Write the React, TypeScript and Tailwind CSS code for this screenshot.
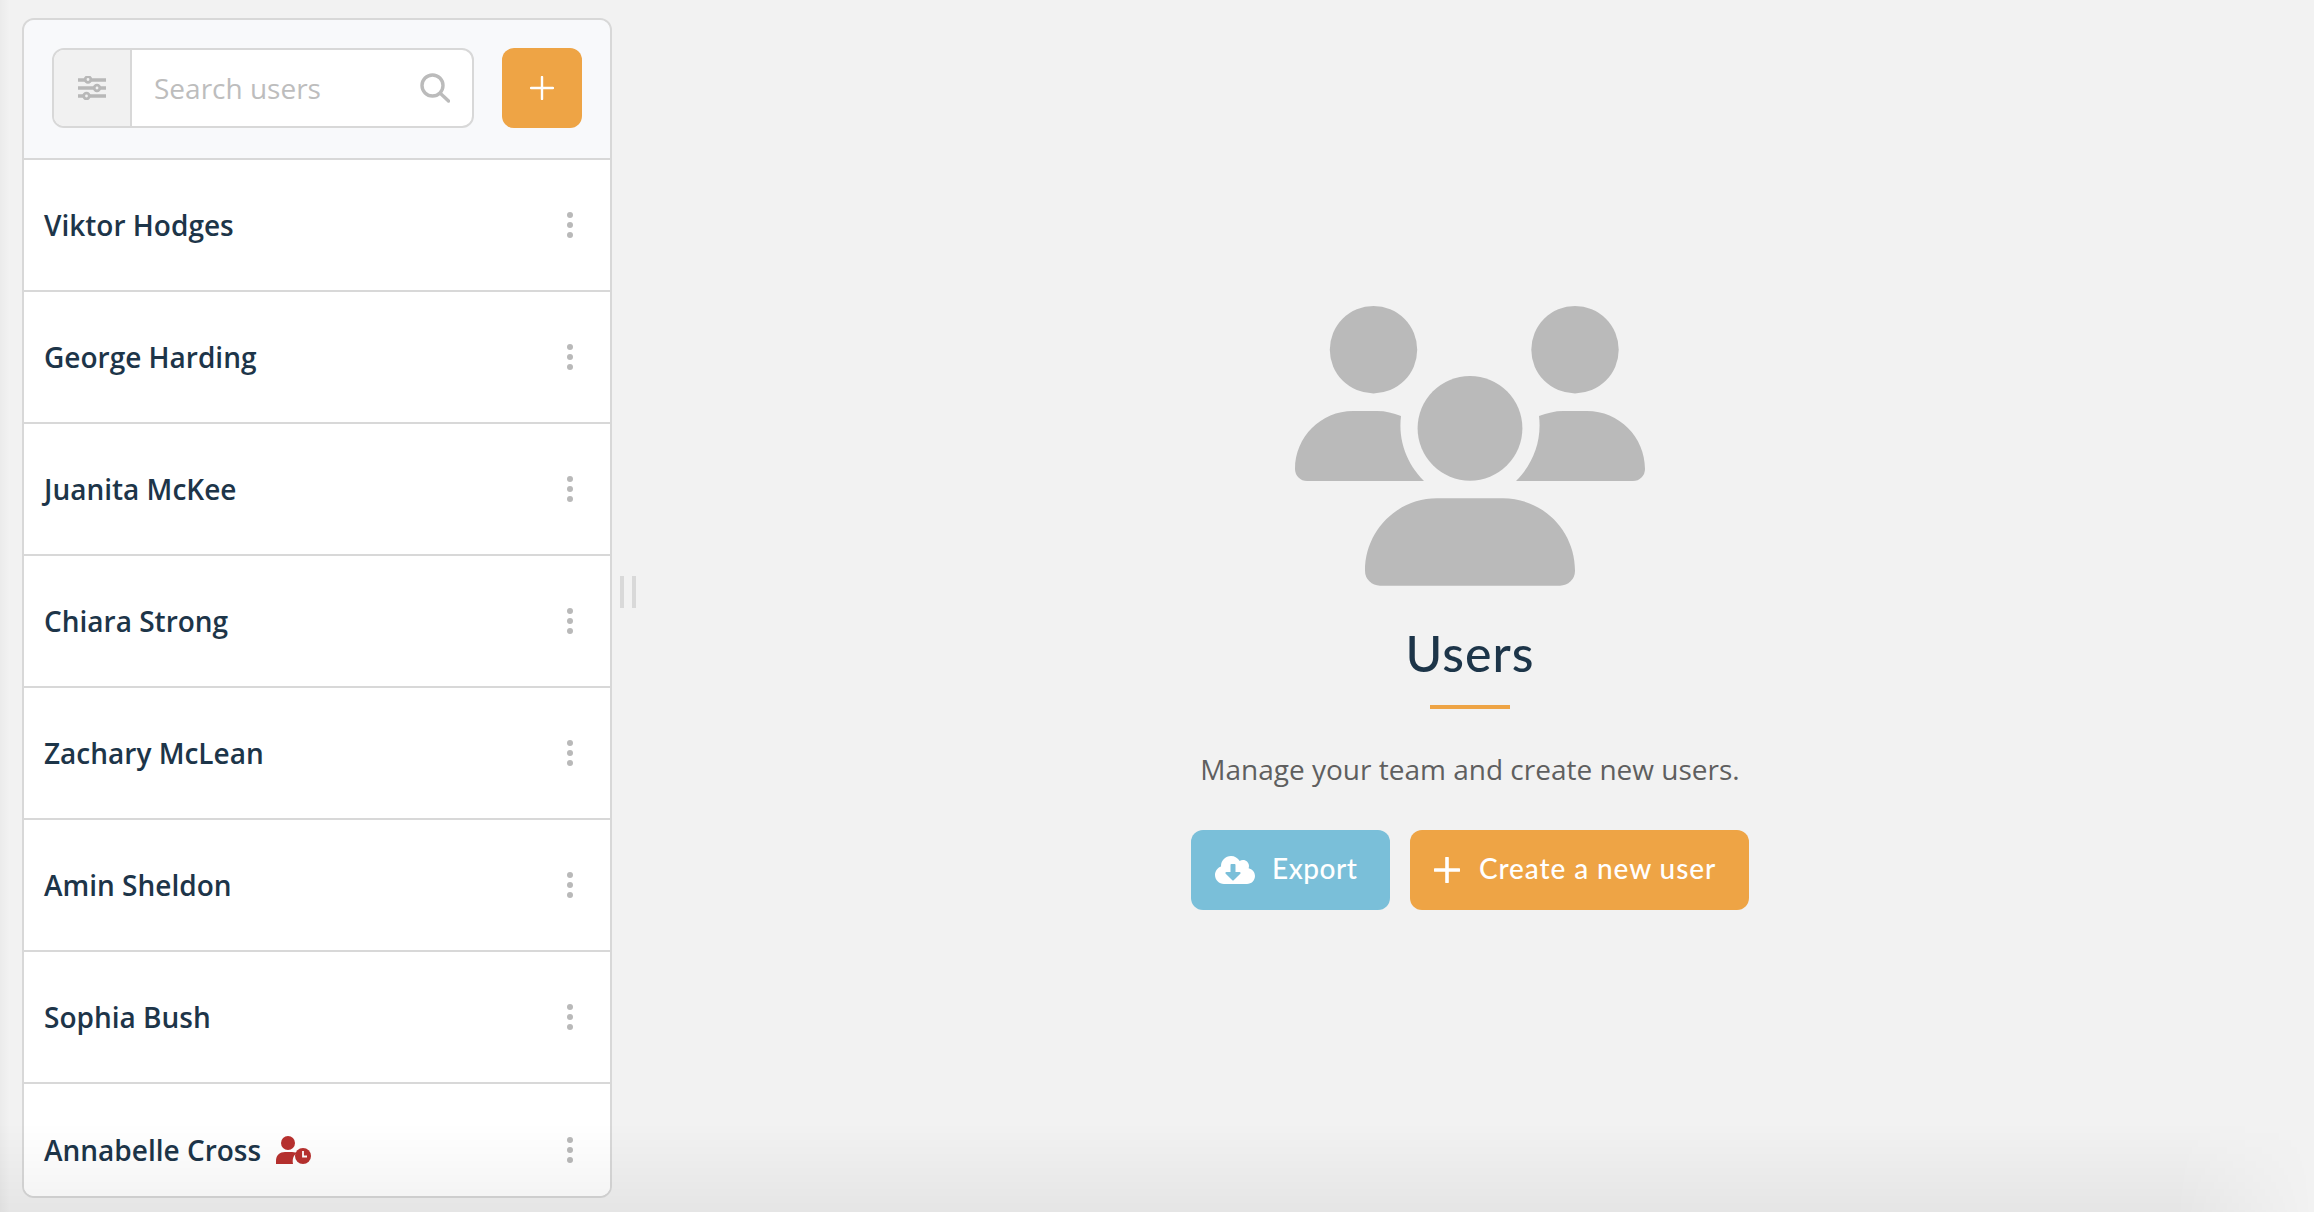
import { FaCloudDownloadAlt } from "react-icons/fa";

const users = [
  "Viktor Hodges",
  "George Harding",
  "Juanita McKee",
  "Chiara Strong",
  "Zachary McLean",
  "Amin Sheldon",
  "Sophia Bush",
  "Annabelle Cross",
];

function FilterIcon() {
  return (
    <svg width="28" height="24" viewBox="0 0 28 24" fill="none" stroke="#b8b8b8">
      <path d="M0 4h28M0 12h28M0 20h28" strokeWidth="3.4" />
      <circle cx="10" cy="3.5" r="2.8" fill="#f1f1f1" strokeWidth="2.8" />
      <circle cx="19" cy="12" r="2.8" fill="#f1f1f1" strokeWidth="2.8" />
      <circle cx="8.5" cy="20" r="2.8" fill="#f1f1f1" strokeWidth="2.8" />
    </svg>
  );
}

function SearchIcon() {
  return (
    <svg width="30" height="30" viewBox="0 0 30 30" fill="none" stroke="#bbbbbb" strokeWidth="3.4" strokeLinecap="round">
      <circle cx="12.5" cy="12.5" r="10.5" />
      <path d="M20.5 20.5L28.5 28" />
    </svg>
  );
}

function PlusIcon({ size, stroke }: { size: number; stroke: number }) {
  return (
    <svg width={size} height={size} viewBox={`0 0 ${size} ${size}`} stroke="#ffffff" strokeWidth={stroke} strokeLinecap="round">
      <path d={`M${size / 2} 1V${size - 1}M1 ${size / 2}H${size - 1}`} />
    </svg>
  );
}

function PendingIcon() {
  return (
    <svg width="35" height="28" viewBox="0 0 35 28" className="shrink-0">
      <circle cx="12" cy="7" r="7" fill="#b8312f" />
      <path d="M0 28v-3c0-6 4-9 9-9h7c3 0 4 1 5 1-3 2-5 5-4 11z" fill="#b8312f" />
      <circle cx="27" cy="20" r="8" fill="#b8312f" />
      <path d="M27 15v5.500h4" fill="none" stroke="#ffffff" strokeWidth="1.8" />
    </svg>
  );
}

function TeamIcon() {
  return (
    <svg width="350" height="281" viewBox="35 25 350 281" fill="#bababa">
      <circle cx="113.5" cy="69.7" r="43.7" />
      <circle cx="315" cy="69.7" r="43.7" />
      <circle cx="210" cy="148.3" r="52.4" />
      <path d="M47 201a12 12 0 0 1-12-12c0-32 26-58 58-58h24c9 0 16 2 24 5-3 25 6 48 23 65z" />
      <path d="M373 201a12 12 0 0 0 12-12c0-32-26-58-58-58h-24c-8 0-16 2-24 5 3 25-6 48-23 65z" />
      <path d="M120 305.700a15 15 0 0 1-15-15c0-40 32-72.400 72-72.400h66c40 0 72 32.400 72 72.400a15 15 0 0 1-15 15z" />
    </svg>
  );
}

function UserRow({ name, pending }: { name: string; pending: boolean }) {
  return (
    <div className="flex h-[132px] shrink-0 items-center justify-between border-b-2 border-[#d8d8d8] bg-white pr-[37px] pl-[20px] last:border-b-0">
      <div className="flex items-center gap-[15px]">
        <span className="text-[28px] font-semibold text-[#1d3549]">{name}</span>
        {pending && <PendingIcon />}
      </div>
      <div className="flex flex-col gap-[4px]">
        <span className="size-[6px] rounded-full bg-[#b9b9b9]" />
        <span className="size-[6px] rounded-full bg-[#b9b9b9]" />
        <span className="size-[6px] rounded-full bg-[#b9b9b9]" />
      </div>
    </div>
  );
}

export default function App() {
  return (
    <div className="relative flex h-screen overflow-hidden bg-[#f2f2f2] pt-[18px] pb-[14px] pl-[22px] font-['Open_Sans',sans-serif]">
      <aside className="flex w-[590px] shrink-0 flex-col overflow-hidden rounded-[12px] border-2 border-[#d8d8d8]">
        <div className="flex h-[140px] shrink-0 gap-[28px] border-b-2 border-[#d8d8d8] bg-[#f8f9fb] pt-[28px] pl-[28px]">
          <div className="flex h-[80px] w-[422px] overflow-hidden rounded-[12px] border-2 border-[#d8d8d8] bg-white">
            <div className="flex w-[78px] shrink-0 items-center justify-center border-r-2 border-[#d8d8d8] bg-[#f1f1f1]">
              <FilterIcon />
            </div>
            <div className="flex flex-1 items-center justify-between pr-[22px] pl-[22px]">
              <span className="text-[28px] text-[#bdbdbd]">Search users</span>
              <SearchIcon />
            </div>
          </div>
          <div className="flex h-[80px] w-[80px] items-center justify-center rounded-[12px] bg-[#eea445]">
            <PlusIcon size={24} stroke={2.4} />
          </div>
        </div>
        <div className="flex flex-1 flex-col overflow-hidden bg-white">
          {users.map((name) => (
            <UserRow key={name} name={name} pending={name === "Annabelle Cross"} />
          ))}
        </div>
      </aside>

      <div className="flex w-[24px] shrink-0 items-center justify-end pb-[32px]">
        <div className="flex gap-[8px]">
          <span className="h-[32px] w-[4px] bg-[#d9d9d9]" />
          <span className="h-[32px] w-[4px] bg-[#d9d9d9]" />
        </div>
      </div>

      <main className="flex flex-1 flex-col items-center justify-center pr-[10px] pb-[2px]">
        <TeamIcon />
        <h1 className="mt-[38px] font-['Lato',sans-serif] text-[50px] leading-[58px] font-medium tracking-[1px] text-[#1d3549]">Users</h1>
        <div className="mt-[23px] h-[4px] w-[80px] bg-[#eea445]" />
        <p className="mt-[41px] text-[28px] leading-[38px] text-[#5f5f5f]">Manage your team and create new users.</p>
        <div className="mt-[42px] flex gap-[20px] font-['Lato',sans-serif] text-[28px] font-medium tracking-[0.9px] text-white">
          <button className="flex h-[80px] w-[199px] items-center gap-[17px] rounded-[12px] bg-[#7abfd9] pl-[24px]">
            <FaCloudDownloadAlt className="h-[32px] w-[40px]" />
            <span className="pb-[3px] tracking-[0.5px]">Export</span>
          </button>
          <button className="flex h-[80px] w-[339px] items-center gap-[19px] rounded-[12px] bg-[#eea445] pl-[24px]">
            <PlusIcon size={26} stroke={3.6} />
            <span className="pb-[3px]">Create a new user</span>
          </button>
        </div>
      </main>

      <div className="pointer-events-none absolute inset-y-0 left-0 w-[10px] bg-gradient-to-r from-black/3 to-transparent" />
      <div className="pointer-events-none absolute inset-x-0 bottom-0 h-[90px] bg-gradient-to-t from-black/5 to-transparent [mask-image:linear-gradient(to_right,black_94%,transparent)]" />
    </div>
  );
}
